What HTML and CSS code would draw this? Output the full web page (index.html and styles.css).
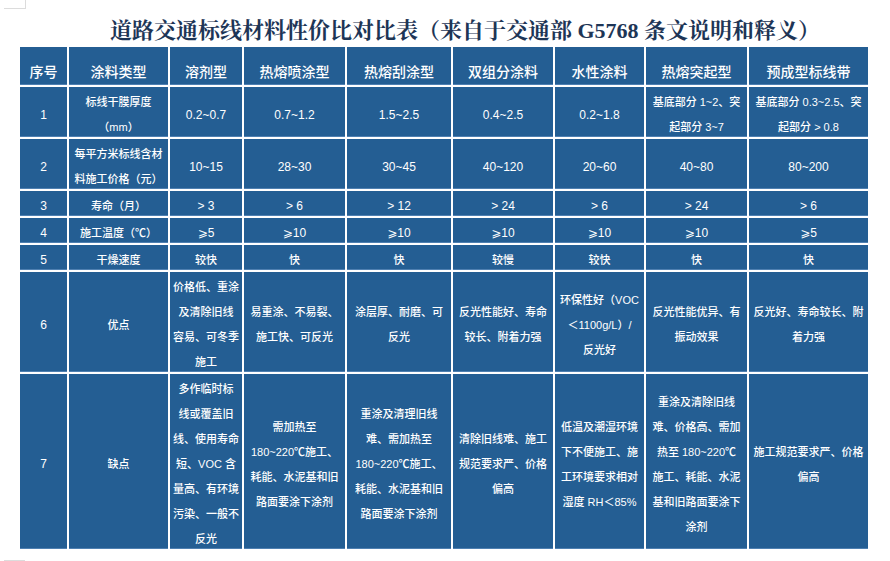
FILE: index.html
```html
<!DOCTYPE html>
<html lang="zh-CN">
<head>
<meta charset="utf-8">
<title>道路交通标线材料性价比对比表</title>
<link rel="stylesheet" href="styles.css">
</head>
<body>
<div class="page">
  <span class="mark mark-tl"></span>
  <span class="mark mark-bl"></span>
  <h1 class="title">道路交通标线材料性价比对比表（来自于交通部 G5768 条文说明和释义）</h1>
  <table class="cmp">
    <colgroup>
      <col class="w1"><col class="w2"><col class="w3"><col class="w4"><col class="w5"><col class="w6"><col class="w7"><col class="w8"><col class="w9">
    </colgroup>
    <thead>
      <tr class="r-head">
        <th>序号</th><th>涂料类型</th><th>溶剂型</th><th>热熔喷涂型</th><th>热熔刮涂型</th><th>双组分涂料</th><th>水性涂料</th><th>热熔突起型</th><th>预成型标线带</th>
      </tr>
    </thead>
    <tbody>
      <tr class="r-two">
        <td class="num">1</td><td>标线干膜厚度<br>（mm）</td><td class="num">0.2~0.7</td><td class="num">0.7~1.2</td><td class="num">1.5~2.5</td><td class="num">0.4~2.5</td><td class="num">0.2~1.8</td><td>基底部分 1~2、突<br>起部分 3~7</td><td>基底部分 0.3~2.5、突<br>起部分 &gt; 0.8</td>
      </tr>
      <tr class="r-two">
        <td class="num">2</td><td>每平方米标线含材<br>料施工价格（元）</td><td class="num">10~15</td><td class="num">28~30</td><td class="num">30~45</td><td class="num">40~120</td><td class="num">20~60</td><td class="num">40~80</td><td class="num">80~200</td>
      </tr>
      <tr class="r-one">
        <td class="num">3</td><td>寿命（月）</td><td class="num">&gt; 3</td><td class="num">&gt; 6</td><td class="num">&gt; 12</td><td class="num">&gt; 24</td><td class="num">&gt; 6</td><td class="num">&gt; 24</td><td class="num">&gt; 6</td>
      </tr>
      <tr class="r-one">
        <td class="num">4</td><td>施工温度（℃）</td><td class="num">⩾5</td><td class="num">⩾10</td><td class="num">⩾10</td><td class="num">⩾10</td><td class="num">⩾10</td><td class="num">⩾10</td><td class="num">⩾5</td>
      </tr>
      <tr class="r-one">
        <td class="num">5</td><td>干燥速度</td><td>较快</td><td>快</td><td>快</td><td>较慢</td><td>较快</td><td>快</td><td>快</td>
      </tr>
      <tr class="r-six">
        <td class="num">6</td><td>优点</td><td>价格低、重涂<br>及清除旧线<br>容易、可冬季<br>施工</td><td>易重涂、不易裂、<br>施工快、可反光</td><td>涂层厚、耐磨、可<br>反光</td><td>反光性能好、寿命<br>较长、附着力强</td><td>环保性好（VOC<br>＜1100g/L）/<br>反光好</td><td>反光性能优异、有<br>振动效果</td><td>反光好、寿命较长、附<br>着力强</td>
      </tr>
      <tr class="r-seven">
        <td class="num">7</td><td>缺点</td><td>多作临时标<br>线或覆盖旧<br>线、使用寿命<br>短、VOC 含<br>量高、有环境<br>污染、一般不<br>反光</td><td>需加热至<br>180~220℃施工、<br>耗能、水泥基和旧<br>路面要涂下涂剂</td><td>重涂及清理旧线<br>难、需加热至<br>180~220℃施工、<br>耗能、水泥基和旧<br>路面要涂下涂剂</td><td>清除旧线难、施工<br>规范要求严、价格<br>偏高</td><td>低温及潮湿环境<br>下不便施工、施<br>工环境要求相对<br>湿度 RH＜85%</td><td>重涂及清除旧线<br>难、价格高、需加<br>热至 180~220℃<br>施工、耗能、水泥<br>基和旧路面要涂下<br>涂剂</td><td>施工规范要求严、价格<br>偏高</td>
      </tr>
    </tbody>
  </table>
</div>
</body>
</html>
```

FILE: styles.css
```css
html, body {
  margin: 0;
  padding: 0;
  background: #ffffff;
}

.page {
  position: relative;
  width: 890px;
  height: 561px;
  overflow: hidden;
}

.mark {
  position: absolute;
  border-color: #dcdcdc;
  border-style: solid;
  border-width: 0;
}

.mark-tl {
  left: 4px;
  top: 0;
  width: 21px;
  height: 8px;
  border-right-width: 1px;
  border-bottom-width: 1px;
}

.mark-bl {
  left: 4px;
  top: 560px;
  width: 21px;
  height: 1px;
  border-top-width: 1px;
}

.title {
  margin: 0;
  padding: 16px 0 0 40px;
  height: 29px;
  line-height: 29px;
  font-family: "Liberation Serif", "Noto Serif CJK SC", "Noto Sans CJK SC", serif;
  font-size: 22px;
  font-weight: bold;
  color: #1d3556;
  text-align: center;
  white-space: nowrap;
}

.cmp {
  margin: 0 0 0 18px;
  width: 852px;
  table-layout: fixed;
  border-collapse: separate;
  border-spacing: 2px;
  font-family: "Liberation Sans", "Noto Sans CJK SC", "DejaVu Sans", sans-serif;
  color: #ffffff;
}

.w1 { width: 47px; }
.w2 { width: 99px; }
.w3 { width: 72px; }
.w4 { width: 101px; }
.w5 { width: 104px; }
.w6 { width: 100px; }
.w7 { width: 89px; }
.w8 { width: 101px; }
.w9 { width: 119px; }

.cmp th,
.cmp td {
  background: #245e93;
  box-shadow: inset 0 -1px 0 #4f80b1;
  padding: 0;
  text-align: center;
  white-space: nowrap;
  overflow: visible;
}

.cmp th {
  height: 38px;
  font-size: 14px;
  font-weight: 500;
  line-height: 20px;
  vertical-align: bottom;
  padding-bottom: 3px;
  box-sizing: border-box;
}

.cmp td {
  font-size: 11px;
  font-weight: 500;
  line-height: 25px;
  vertical-align: middle;
}

.cmp td.num {
  font-size: 12px;
  font-weight: normal;
}

.cmp td::before {
  content: "";
  display: block;
  height: 3px;
}

.cmp td::after {
  content: "";
  display: block;
  margin-top: -3px;
}

.r-two td { height: 50px; }
.r-one td { height: 25px; }
.r-six td { height: 99px; }
.r-seven td { height: 175px; }
```
